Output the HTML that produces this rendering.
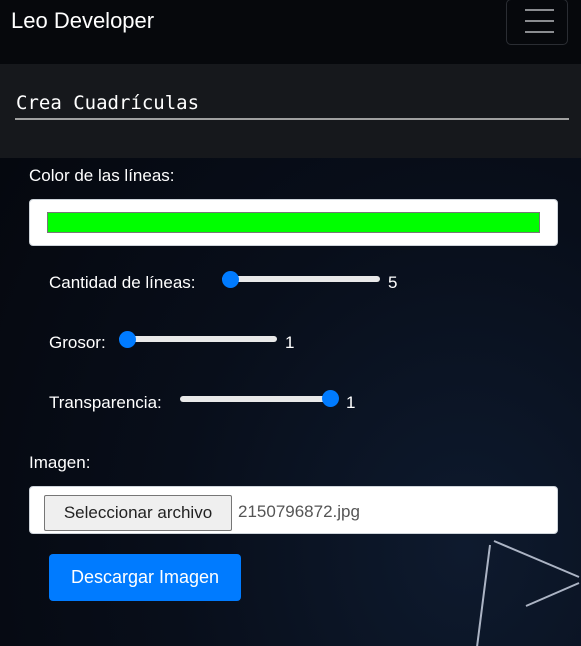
<!DOCTYPE html>
<html><head><meta charset="utf-8"><style>
body{margin:0;width:581px;height:646px;overflow:hidden;background:radial-gradient(ellipse at 80% 85%,#0e1a2e 0%,#080e1a 45%,#04060b 100%);font-family:"Liberation Sans",sans-serif;color:#fff;position:relative}
.nav{position:absolute;left:0;top:0;width:581px;height:64px;background:#06080c}
.brand{position:absolute;left:11px;top:8px;font-size:22px;color:#fff}
.tog{position:absolute;left:506px;top:-1px;width:60px;height:44px;border:1px solid #2a2d33;border-radius:5px}
.tog i{position:absolute;left:18px;width:29px;height:2px;background:#8a8c90}
.panel{position:absolute;left:0;top:64px;width:581px;height:94px;background:#16181c}
.h{position:absolute;left:16px;top:92px;font-family:"DejaVu Sans Mono",monospace;font-size:19px;color:#fff}
.line{position:absolute;left:15px;top:118px;height:2px;background:#a0a0a0}
.lbl{position:absolute;font-size:17px;color:#fff}
.box{position:absolute;background:#fff;border:1px solid #ced4da;border-radius:4px}
.track{position:absolute;height:6px;background:#e9e9e9;border-radius:3px}
.thumb{position:absolute;width:17px;height:17px;border-radius:50%;background:#007bff}
.btn{position:absolute;left:49px;top:554px;width:192px;height:47px;background:#007bff;border-radius:4px;font-size:18px;text-align:center;line-height:47px;color:#fff}
</style></head><body>
<svg style="position:absolute;left:470px;top:530px" width="111" height="116"><g stroke="#c8d0e0" stroke-width="2" fill="none" opacity=".85"><path d="M20 15 L7 117"/><path d="M24 11 L109 47"/><path d="M109 53 L56 76"/></g></svg>
<div class="nav"><div class="brand">Leo Developer</div><div class="tog"><i style="top:9px"></i><i style="top:20px"></i><i style="top:31px"></i></div></div>
<div class="panel"></div>
<div class="h">Crea Cuadrículas</div>
<div class="line" style="width:554px"></div>
<div class="lbl" style="left:29px;top:166px">Color de las líneas:</div>
<div class="box" style="left:29px;top:199px;width:527px;height:45px"><div style="position:absolute;left:17px;top:12px;width:491px;height:19px;background:#00ff00;border:1px solid #777"></div></div>
<div class="lbl" style="left:49px;top:273px">Cantidad de líneas:</div>
<div class="track" style="left:222px;top:276px;width:158px"></div><div class="thumb" style="left:222px;top:271px"></div>
<div class="lbl" style="left:388px;top:273px">5</div>
<div class="lbl" style="left:49px;top:333px">Grosor:</div>
<div class="track" style="left:119px;top:336px;width:158px"></div><div class="thumb" style="left:119px;top:331px"></div>
<div class="lbl" style="left:285px;top:333px">1</div>
<div class="lbl" style="left:49px;top:393px">Transparencia:</div>
<div class="track" style="left:180px;top:396px;width:158px"></div><div class="thumb" style="left:322px;top:390px"></div>
<div class="lbl" style="left:346px;top:393px">1</div>
<div class="lbl" style="left:29px;top:453px">Imagen:</div>
<div class="box" style="left:29px;top:486px;width:527px;height:46px"><div style="position:absolute;left:14px;top:8px;width:186px;height:34px;background:#efefef;border:1px solid #767676;border-radius:2px;color:#222;font-size:17px;line-height:34px;text-align:center">Seleccionar archivo</div><div style="position:absolute;left:208px;top:8px;line-height:34px;font-size:17px;color:#555">2150796872.jpg</div></div>
<div class="btn">Descargar Imagen</div>
</body></html>
